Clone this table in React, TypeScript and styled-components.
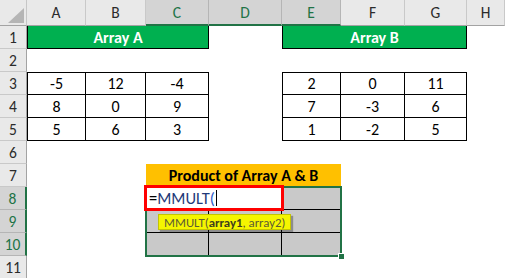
import React from "react";
import styled, { createGlobalStyle } from "styled-components";

const GlobalStyle = createGlobalStyle`
  html, body {
    margin: 0;
    padding: 0;
    background: #fff;
  }
  body {
    font-family: Calibri, Carlito, Lato, "Open Sans", sans-serif;
    overflow: hidden;
  }
`;

const COLUMNS = ["A", "B", "C", "D", "E", "F", "G", "H"];
const ACTIVE_COLUMNS = ["C", "D", "E"];
const ROWS = [1, 2, 3, 4, 5, 6, 7, 8, 9, 10, 11];
const ACTIVE_ROWS = [8, 9, 10];

const arrayA = [
  [-5, 12, -4],
  [8, 0, 9],
  [5, 6, 3],
];
const arrayB = [
  [2, 0, 11],
  [7, -3, 6],
  [1, -2, 5],
];

const Sheet = styled.div`
  display: grid;
  grid-template-columns: 27px 59px 60px 63px 73px 59px 64px 62px 1fr;
  grid-template-rows: 26px repeat(11, 23px);
  width: 505px;
  height: 278px;
  overflow: hidden;
  font-size: 16px;
  color: #000;
`;

const Corner = styled.div`
  grid-column: 1;
  grid-row: 1;
  position: relative;
  background: #e9e9e9;
  border-right: 1px solid #c6c6c6;
  border-bottom: 1px solid #a3a3a3;
`;

const CornerTriangle = styled.div`
  position: absolute;
  right: 2px;
  bottom: 2px;
  width: 16px;
  height: 15px;
  background: #b5b5b5;
  clip-path: polygon(100% 0, 100% 100%, 0 100%);
`;

const ColHeader = styled.div<{ $active?: boolean }>`
  grid-row: 1;
  display: flex;
  align-items: center;
  justify-content: center;
  box-sizing: border-box;
  font-size: 15.5px;
  background: ${({ $active }) => ($active ? "#d4d4d4" : "#e9e9e9")};
  color: ${({ $active }) => ($active ? "#217346" : "#2b2b2b")};
  border-right: 1px solid ${({ $active }) => ($active ? "#b5b5b5" : "#c9c9c9")};
  border-bottom: ${({ $active }) =>
    $active ? "2px solid #217346" : "1px solid #a3a3a3"};
`;

const RowHeader = styled.div<{ $row: number; $active?: boolean }>`
  grid-column: 1;
  grid-row: ${({ $row }) => $row + 1};
  display: flex;
  align-items: center;
  justify-content: center;
  box-sizing: border-box;
  font-size: 15.5px;
  background: ${({ $active }) => ($active ? "#d4d4d4" : "#e9e9e9")};
  color: ${({ $active }) => ($active ? "#217346" : "#2b2b2b")};
  border-bottom: 1px solid ${({ $active }) => ($active ? "#b5b5b5" : "#c9c9c9")};
  border-right: ${({ $active }) =>
    $active ? "2px solid #217346" : "1px solid #a3a3a3"};
`;

const TitleBar = styled.div<{ $cols: string }>`
  grid-column: ${({ $cols }) => $cols};
  grid-row: 2;
  display: flex;
  align-items: center;
  justify-content: center;
  background: #00b050;
  color: #fff;
  font-weight: 700;
  border: 1px solid #000;
  border-top: none;
`;

const DataTable = styled.div<{ $cols: string }>`
  grid-column: ${({ $cols }) => $cols};
  grid-row: 4 / 7;
  display: grid;
  grid-template-columns: subgrid;
  grid-template-rows: subgrid;
  border-top: 1px solid #000;
  border-left: 1px solid #000;
`;

const Cell = styled.div`
  display: flex;
  align-items: center;
  justify-content: center;
  border-right: 1px solid #000;
  border-bottom: 1px solid #000;
`;

const ProductHead = styled.div`
  grid-column: 4 / 7;
  grid-row: 8;
  display: flex;
  align-items: center;
  justify-content: center;
  background: #ffc000;
  font-weight: 700;
`;

const ProductRange = styled.div`
  grid-column: 4 / 7;
  grid-row: 9 / 12;
  position: relative;
  display: grid;
  grid-template-columns: subgrid;
  grid-template-rows: subgrid;
  background: #c9c9c9;

  &::after {
    content: "";
    position: absolute;
    inset: -1px;
    border: 2px solid #217346;
    pointer-events: none;
    z-index: 1;
  }
`;

const RangeCell = styled.div<{ $lastCol?: boolean; $lastRow?: boolean }>`
  border-right: ${({ $lastCol }) => ($lastCol ? "none" : "1px solid #000")};
  border-bottom: ${({ $lastRow }) => ($lastRow ? "none" : "1px solid #000")};
`;

const FillHandle = styled.div`
  position: absolute;
  right: -4px;
  bottom: -4px;
  width: 5px;
  height: 5px;
  background: #217346;
  border: 1px solid #fff;
  z-index: 2;
`;

const Editor = styled.div`
  position: absolute;
  left: -2px;
  top: -2px;
  width: 140px;
  height: 26px;
  box-sizing: border-box;
  border: 3px solid #ff0000;
  background: #fff;
  display: flex;
  align-items: center;
  padding-left: 2px;
  font-size: 16.5px;
  z-index: 3;
`;

const FnName = styled.span`
  color: #1f3a7a;
`;

const Paren = styled.span`
  color: #2b5bc9;
`;

const Caret = styled.span`
  display: inline-block;
  width: 1px;
  height: 16px;
  margin-left: 1px;
  background: #000;
`;

const Tooltip = styled.div`
  position: absolute;
  left: 12px;
  top: 27px;
  height: 16px;
  box-sizing: border-box;
  display: flex;
  align-items: center;
  padding: 0 5px;
  background: #f5f500;
  border: 1px solid #c4c400;
  box-shadow: 2px 2px 1px rgba(0, 0, 0, 0.3);
  color: #5c5c34;
  font-size: 12.8px;
  white-space: nowrap;
  z-index: 4;

  b {
    color: #3e3e1e;
    font-weight: 700;
  }
`;

export default function App() {
  return (
    <>
      <GlobalStyle />
      <Sheet>
        <Corner>
          <CornerTriangle />
        </Corner>
        {COLUMNS.map((c) => (
          <ColHeader key={c} $active={ACTIVE_COLUMNS.includes(c)}>
            {c}
          </ColHeader>
        ))}
        {ROWS.map((r) => (
          <RowHeader key={r} $row={r} $active={ACTIVE_ROWS.includes(r)}>
            {r}
          </RowHeader>
        ))}

        <TitleBar $cols="2 / 5">Array A</TitleBar>
        <TitleBar $cols="6 / 9">Array B</TitleBar>

        <DataTable $cols="2 / 5">
          {arrayA.flat().map((v, i) => (
            <Cell key={i}>{v}</Cell>
          ))}
        </DataTable>
        <DataTable $cols="6 / 9">
          {arrayB.flat().map((v, i) => (
            <Cell key={i}>{v}</Cell>
          ))}
        </DataTable>

        <ProductHead>Product of Array A &amp; B</ProductHead>
        <ProductRange>
          {[0, 1, 2].map((r) =>
            [0, 1, 2].map((c) => (
              <RangeCell key={`${r}-${c}`} $lastCol={c === 2} $lastRow={r === 2} />
            ))
          )}
          <Editor>
            =<FnName>MMULT</FnName>
            <Paren>(</Paren>
            <Caret />
          </Editor>
          <Tooltip>
            MMULT(<b>array1</b>, array2)
          </Tooltip>
          <FillHandle />
        </ProductRange>
      </Sheet>
    </>
  );
}
